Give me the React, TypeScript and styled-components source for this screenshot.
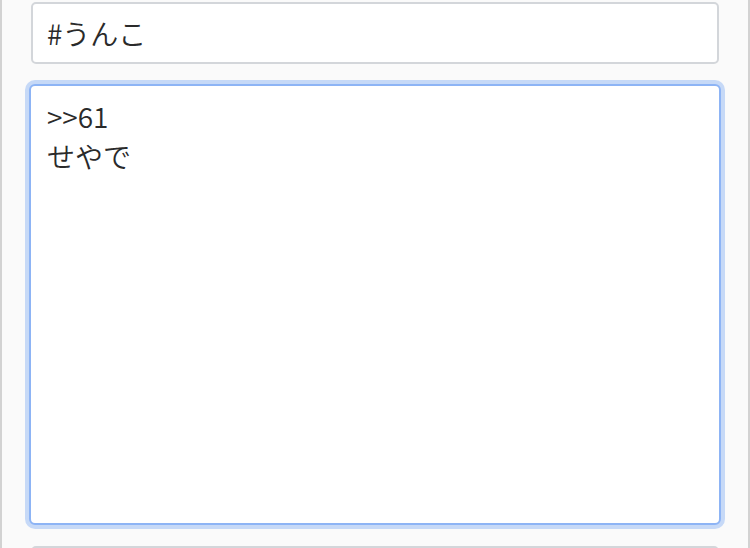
import { createGlobalStyle } from 'styled-components';
import styled from 'styled-components';

const GlobalStyle = createGlobalStyle`
  html, body {
    margin: 0;
    padding: 0;
    background: #fafafa;
  }
`;

const Page = styled.div`
  width: 750px;
  height: 548px;
  box-sizing: border-box;
  overflow: hidden;
  border-left: 2px solid #d2d2d2;
  border-right: 2px solid #d2d2d2;
  background: #fafafa;
  padding: 2px 29px 0;
  display: flex;
  flex-direction: column;
  font-family: 'Noto Sans CJK JP', 'Noto Sans', sans-serif;
`;

const Input = styled.div`
  box-sizing: border-box;
  flex: none;
  height: 62px;
  margin-bottom: 20px;
  background: #fff;
  border-radius: 5px;
  border: 2px solid #d3d6da;
  padding: 0 14px;
  display: flex;
  align-items: center;
  color: #2a2a2a;
  font-size: 28px;
  font-weight: 350;
`;

const TextArea = styled.div`
  box-sizing: border-box;
  flex: none;
  height: 441px;
  margin: 0 -2px 21px;
  background: #fff;
  border-radius: 6px;
  border: 2px solid #8db4f5;
  box-shadow: 0 0 0 4px #c6d9f7;
  padding: 10px 16px;
  color: #2a2a2a;
  font-size: 28px;
  font-weight: 350;
  line-height: 40px;
`;

const Line = styled.div`
  white-space: pre;
`;

export default function App() {
  return (
    <>
      <GlobalStyle />
      <Page>
        <Input>#うんこ</Input>
        <TextArea>
          <Line>{'>>61'}</Line>
          <Line>せやで</Line>
        </TextArea>
        <Input />
      </Page>
    </>
  );
}
